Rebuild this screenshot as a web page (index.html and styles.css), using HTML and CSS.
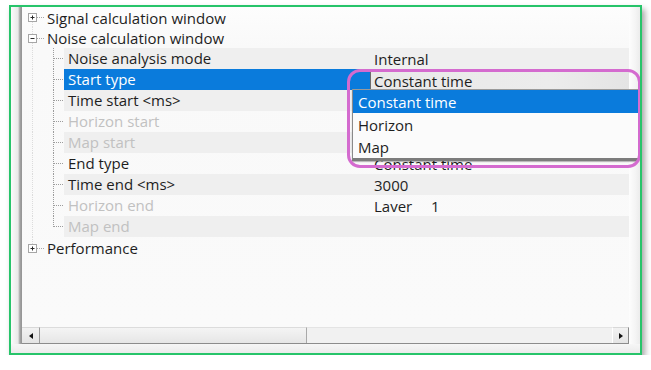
FILE: index.html
```html
<!DOCTYPE html>
<html>
<head>
<meta charset="utf-8">
<link rel="stylesheet" href="styles.css">
</head>
<body>
<div class="page">
  <div class="frame">
    <div class="body">
      <div class="lbevel"></div>
      <div class="main">
        <div class="tree">
          <div class="row top first">
            <svg class="gut gut-top" width="25" height="20" viewBox="0 0 25 20">
              <path d="M10.5 15v5" class="root"/>
              <path d="M15 10.5h7" class="tick"/>
              <rect x="6.5" y="6.5" width="8" height="8" class="box"/>
              <path d="M8.5 10.5h4M10.5 8.5v4" class="sign"/>
            </svg>
            <div class="lab">Signal calculation window</div>
          </div>
          <div class="row top">
            <svg class="gut gut-top" width="25" height="21" viewBox="0 0 25 21">
              <path d="M10.5 0v7M10.5 16v5" class="root"/>
              <path d="M15 11.5h7" class="tick"/>
              <rect x="6.5" y="7.5" width="8" height="8" class="box"/>
              <path d="M8.5 11.5h4" class="sign"/>
            </svg>
            <div class="lab">Noise calculation window</div>
          </div>

          <div class="row child alt">
            <svg class="gut" width="42" height="21" viewBox="0 0 42 21"><path d="M10.5 0v21" class="root"/><path d="M31.5 0v21M32 10.5h10" class="line"/></svg>
            <div class="cell"><div class="lab">Noise analysis mode</div><div class="val">Internal</div></div>
          </div>
          <div class="row child sel">
            <svg class="gut" width="42" height="21" viewBox="0 0 42 21"><path d="M10.5 0v21" class="root"/><path d="M31.5 0v21M32 10.5h10" class="line"/></svg>
            <div class="cell"><div class="lab">Start type</div><div class="val val-combo"><div class="combo">Constant time</div></div></div>
          </div>
          <div class="row child alt">
            <svg class="gut" width="42" height="21" viewBox="0 0 42 21"><path d="M10.5 0v21" class="root"/><path d="M31.5 0v21M32 10.5h10" class="line"/></svg>
            <div class="cell"><div class="lab">Time start &lt;ms&gt;</div><div class="val"></div></div>
          </div>
          <div class="row child dis">
            <svg class="gut" width="42" height="21" viewBox="0 0 42 21"><path d="M10.5 0v21" class="root"/><path d="M31.5 0v21M32 10.5h10" class="line"/></svg>
            <div class="cell"><div class="lab">Horizon start</div><div class="val"></div></div>
          </div>
          <div class="row child alt dis">
            <svg class="gut" width="42" height="21" viewBox="0 0 42 21"><path d="M10.5 0v21" class="root"/><path d="M31.5 0v21M32 10.5h10" class="line"/></svg>
            <div class="cell"><div class="lab">Map start</div><div class="val"></div></div>
          </div>
          <div class="row child">
            <svg class="gut" width="42" height="21" viewBox="0 0 42 21"><path d="M10.5 0v21" class="root"/><path d="M31.5 0v21M32 10.5h10" class="line"/></svg>
            <div class="cell"><div class="lab">End type</div><div class="val">Constant time</div></div>
          </div>
          <div class="row child alt">
            <svg class="gut" width="42" height="21" viewBox="0 0 42 21"><path d="M10.5 0v21" class="root"/><path d="M31.5 0v21M32 10.5h10" class="line"/></svg>
            <div class="cell"><div class="lab">Time end &lt;ms&gt;</div><div class="val">3000</div></div>
          </div>
          <div class="row child dis">
            <svg class="gut" width="42" height="21" viewBox="0 0 42 21"><path d="M10.5 0v21" class="root"/><path d="M31.5 0v21M32 10.5h10" class="line"/></svg>
            <div class="cell"><div class="lab">Horizon end</div><div class="val"><span class="layer">Laver</span><span>1</span></div></div>
          </div>
          <div class="row child alt dis">
            <svg class="gut" width="42" height="21" viewBox="0 0 42 21"><path d="M10.5 0v21" class="root"/><path d="M31.5 0v11M32 10.5h10" class="line"/></svg>
            <div class="cell"><div class="lab">Map end</div><div class="val"></div></div>
          </div>

          <div class="row top">
            <svg class="gut gut-top" width="25" height="21" viewBox="0 0 25 21">
              <path d="M10.5 0v7" class="root"/>
              <path d="M15 11.5h7" class="tick"/>
              <rect x="6.5" y="7.5" width="8" height="8" class="box"/>
              <path d="M8.5 11.5h4M10.5 9.5v4" class="sign"/>
            </svg>
            <div class="lab">Performance</div>
          </div>

          <div class="dropdown">
            <div class="item on">Constant time</div>
            <div class="item">Horizon</div>
            <div class="item">Map</div>
          </div>
          <div class="ring"></div>
        </div>
        <div class="hs">
          <div class="btn btn-l"><span class="tri-l"></span></div>
          <div class="thumb"></div>
          <div class="track"></div>
          <div class="btn btn-r"><span class="tri-r"></span></div>
        </div>
      </div>
      <div class="rbevel"></div>
    </div>
    <div class="bbevel"></div>
  </div>
</div>
</body>
</html>
```

FILE: styles.css
```css
* { box-sizing: border-box; }
html, body { margin: 0; padding: 0; background: #ffffff; }
body {
  font-family: "Open Sans", "Noto Sans", sans-serif;
  font-size: 15px;
  color: #1e1e1e;
}
.page { padding: 5px 0 0 9px; }
.frame {
  width: 633px;
  height: 350px;
  border: 2px solid #27c46a;
  box-shadow: 3px 4px 6px rgba(0, 0, 0, 0.35);
  display: flex;
  flex-direction: column;
  background: #f3f3f3;
}
.body {
  height: 337px;
  display: flex;
  overflow: hidden;
}
.lbevel {
  width: 11px;
  flex: none;
  background: linear-gradient(to right, #fbfbfb 0, #e9e9e9 7px, #c4c4c4 8px, #a3a3a3 9px, #939393 11px);
}
.main {
  width: 607px;
  flex: none;
  display: flex;
  flex-direction: column;
}
.rbevel {
  flex: 1;
  background: linear-gradient(to right, #fdfdfd, #f4f4f4 60%, #ececec);
}
.bbevel {
  flex: 1;
  background: linear-gradient(to bottom, #f6f6f6, #ebebeb);
}

/* tree */
.tree {
  height: 320px;
  position: relative;
  background: linear-gradient(to bottom, #fdfdfd 0, #f9f9f9 40px, #fafafa 100%);
}
.row {
  display: flex;
  height: 21px;
  line-height: 21px;
  white-space: nowrap;
}
.row.first { height: 20px; }
.top .lab { padding-top: 1px; }
.gut { display: block; flex: none; }
.gut .root { stroke: #dcdcdc; stroke-dasharray: 1 1; fill: none; }
.gut .line { stroke: #9c9c9c; stroke-dasharray: 1 1; fill: none; }
.gut .tick { stroke: #a8a8a8; stroke-dasharray: 1 1; fill: none; }
.gut .box { fill: #ffffff; stroke: #a6a6a6; }
.gut .sign { stroke: #2a2a2a; fill: none; }
.cell { flex: 1; display: flex; }
.lab { width: 306px; padding-left: 4px; flex: none; }
.top .lab { padding-left: 0; }
.val { flex: 1; padding-left: 4px; padding-top: 1px; }
.alt .cell { background: #efefef; }
.sel .lab { background: #0a7bdc; color: #ffffff; }
.dis .lab { color: #c1c1c1; }
.val-combo { padding-left: 0; padding-top: 0; }
.combo {
  margin-top: 2px;
  height: 19px;
  line-height: 19px;
  padding-left: 3px;
  border-left: 1px solid #6c6c6c;
  border-top: 1px solid #d2d2d2;
  background: linear-gradient(to right, #e9e9e9, #ececec 70%, #e4e4e4);
}
.layer { display: inline-block; width: 57px; }

/* dropdown overlay */
.dropdown {
  position: absolute;
  left: 330px;
  top: 82px;
  width: 287px;
  background: #fbfbfb;
  border-top: 1px solid #9a9a9a;
  border-left: 1px solid #8a8a8a;
  border-bottom: 3px solid #7c7c7c;
  box-shadow: 0 1px 1px rgba(0,0,0,0.25);
}
.item {
  height: 22.5px;
  padding: 2px 0 0 5px;
  line-height: 20.5px;
  color: #1e1e1e;
  white-space: nowrap;
}
.item.on { background: #0a7bdc; color: #ffffff; }
.ring {
  position: absolute;
  left: 325px;
  top: 62px;
  width: 294px;
  height: 99px;
  border: 3px solid #d46bcf;
  border-radius: 13px;
}

/* horizontal scrollbar */
.hs {
  height: 17px;
  display: flex;
  border-bottom: 1px solid #8c8c8c;
  background: #eeeeee;
}
.btn {
  flex: none;
  display: flex;
  align-items: center;
  justify-content: center;
  background: linear-gradient(to bottom, #f2f2f2, #e4e4e4);
}
.btn-l { width: 18px; border-right: 1px solid #9c9c9c; border-top: 1px solid #d8d8d8; }
.btn-r { width: 17px; border-left: 1px solid #ffffff; border-right: 1px solid #8a8a8a; border-top: 1px solid #d8d8d8; }
.thumb {
  width: 267px;
  flex: none;
  background: linear-gradient(to bottom, #f4f4f4, #e6e6e6);
  border-top: 1px solid #dcdcdc;
  border-right: 1px solid #a9a9a9;
}
.track {
  flex: 1;
  background: #f1f1f1;
  border-top: 1px solid #e4e4e4;
}
.tri-l {
  width: 0; height: 0;
  border-top: 3px solid transparent;
  border-bottom: 3px solid transparent;
  border-right: 4px solid #111111;
}
.tri-r {
  width: 0; height: 0;
  border-top: 3px solid transparent;
  border-bottom: 3px solid transparent;
  border-left: 4px solid #111111;
}
```
